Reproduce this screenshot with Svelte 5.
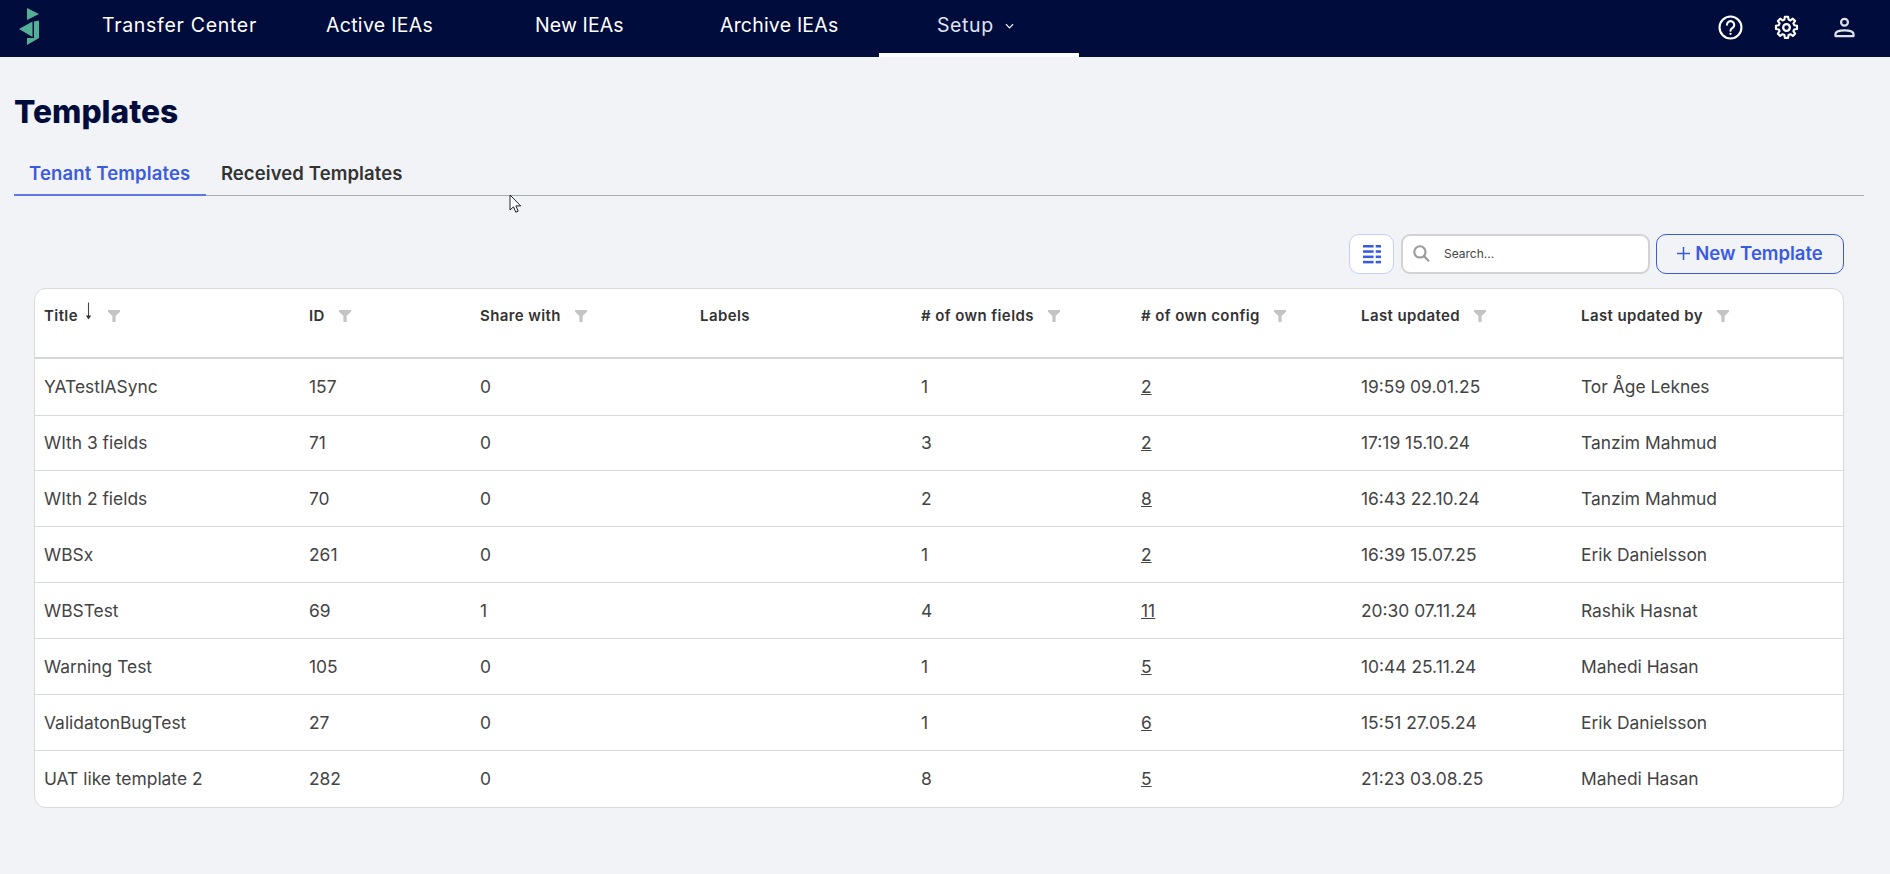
<script>
  const navItems = [
    { label: 'Transfer Center', w: 224, ls: 0.7 },
    { label: 'Active IEAs', w: 209, ls: 0.3 },
    { label: 'New IEAs', w: 185, ls: 0.1 },
    { label: 'Archive IEAs', w: 217, ls: 0.2 }
  ];
  const cols = [
    { label: 'Title', sort: true, filter: true },
    { label: 'ID', filter: true },
    { label: 'Share with', filter: true },
    { label: 'Labels', filter: false },
    { label: '# of own fields', filter: true },
    { label: '# of own config', filter: true },
    { label: 'Last updated', filter: true },
    { label: 'Last updated by', filter: true }
  ];
  const rows = [
    ['YATestIASync', '157', '0', '', '1', '2', '19:59 09.01.25', 'Tor Åge Leknes'],
    ['WIth 3 fields', '71', '0', '', '3', '2', '17:19 15.10.24', 'Tanzim Mahmud'],
    ['WIth 2 fields', '70', '0', '', '2', '8', '16:43 22.10.24', 'Tanzim Mahmud'],
    ['WBSx', '261', '0', '', '1', '2', '16:39 15.07.25', 'Erik Danielsson'],
    ['WBSTest', '69', '1', '', '4', '11', '20:30 07.11.24', 'Rashik Hasnat'],
    ['Warning Test', '105', '0', '', '1', '5', '10:44 25.11.24', 'Mahedi Hasan'],
    ['ValidatonBugTest', '27', '0', '', '1', '6', '15:51 27.05.24', 'Erik Danielsson'],
    ['UAT like template 2', '282', '0', '', '8', '5', '21:23 03.08.25', 'Mahedi Hasan']
  ];
</script>

<div class="page">
  <header class="nav">
    <svg class="logo" viewBox="0 0 20 37" width="20" height="37" aria-label="logo">
      <path d="M8 0 L20 6 L8 12 Z" fill="#54b095" />
      <path d="M0 21 L13.500 13.500 V29 Z" fill="#54b095" />
      <path d="M15 13.500 L20 12.500 V30 L8 37 V30 L15 30 Z" fill="#54b095" />
    </svg>
    <nav class="links">
      {#each navItems as item}
        <div class="link" style="width:{item.w}px;letter-spacing:{item.ls}px">{item.label}</div>
      {/each}
      <div class="link active">
        Setup
        <svg viewBox="0 0 10 6" width="9" height="6" class="chev"><path d="M1 1l4 4 4-4" fill="none" stroke="#fff" stroke-width="1.300" /></svg>
      </div>
    </nav>
    <div class="icons">
      <svg class="i-help" viewBox="0 0 26 26" width="25" height="25" fill="none" stroke="#fff" stroke-width="2.200">
        <circle cx="13" cy="13" r="11.400" />
        <path d="M9.300 10.200a3.800 3.800 0 1 1 5.900 3.200c-1.300.9-2.200 1.500-2.200 3" stroke-linecap="round" />
        <circle cx="13" cy="19.600" r="1.200" fill="#fff" stroke="none" />
      </svg>
      <svg class="i-gear" viewBox="0 0 24 24" width="25" height="25" fill="none" stroke="#fff" stroke-width="2.200" stroke-linejoin="round">
        <path d="M10.300 2h3.400l.5 3 1.900.8 2.500-1.800 2.400 2.400-1.800 2.500.8 1.900 3 .5v3.400l-3 .5-.8 1.900 1.800 2.500-2.400 2.400-2.500-1.800-1.900.8-.5 3h-3.400l-.5-3-1.900-.8-2.500 1.800-2.400-2.400 1.800-2.500-.8-1.900-3-.5v-3.400l3-.5.8-1.900-1.800-2.500 2.400-2.400 2.500 1.800 1.900-.8z" transform="translate(12 12) scale(.92) translate(-12 -13.200)" />
        <circle cx="12" cy="12" r="3.200" />
      </svg>
      <svg class="i-user" viewBox="0 0 22 22" width="21" height="21" fill="none" stroke="#dfe2ea" stroke-width="2.300">
        <circle cx="11" cy="5.500" r="3.600" />
        <path d="M1.500 20v-1.800c0-2.500 3.500-4.200 9.500-4.200s9.500 1.700 9.500 4.200V20z" stroke-linejoin="round" />
      </svg>
    </div>
  </header>

  <main class="main">
    <h1>Templates</h1>
    <div class="tabs">
      <div class="tab on">Tenant Templates</div>
      <div class="tab">Received Templates</div>
    </div>

    <div class="toolbar">
      <button class="columns" aria-label="columns">
        <svg viewBox="0 0 17 18" width="18" height="19" fill="#3a5be0">
          <rect x="0" y="0" width="10" height="2.400" /><rect x="12" y="0" width="5" height="2.400" />
          <rect x="0" y="5" width="10" height="2.400" /><rect x="12" y="5" width="5" height="2.400" />
          <rect x="0" y="10" width="10" height="2.400" /><rect x="12" y="10" width="5" height="2.400" />
          <rect x="0" y="15" width="10" height="2.400" /><rect x="12" y="15" width="5" height="2.400" />
        </svg>
      </button>
      <div class="search">
        <svg viewBox="0 0 16 16" width="17" height="17" fill="none" stroke="#9a9a9a" stroke-width="2">
          <circle cx="6.500" cy="6.500" r="5.300" /><path d="M10.500 10.500 15 15.300" />
        </svg>
        <span>Search...</span>
      </div>
      <button class="new">
        <svg viewBox="0 0 12 12" width="13" height="13" stroke="#3a5be0" stroke-width="1.400"><path d="M6 0v12M0 6h12" /></svg>
        New Template
      </button>
    </div>

    <div class="card">
      <table>
        <colgroup>
          <col style="width:265px" /><col style="width:171px" /><col style="width:220px" /><col style="width:221px" />
          <col style="width:220px" /><col style="width:220px" /><col style="width:220px" /><col />
        </colgroup>
        <thead>
          <tr>
            {#each cols as c}
              <th>
                <div class="th">
                  <span>{c.label}</span>
                  {#if c.sort}
                    <svg class="sort" viewBox="0 0 7 18" width="7" height="19"><path d="M3.500 0v15" stroke="#444" stroke-width="1.100" /><path d="M.8 13h5.400L3.500 17z" fill="#333" /></svg>
                  {/if}
                  {#if c.filter}
                    <svg class="filter" viewBox="0 0 11 11" width="12" height="12"><path d="M0 0h11v1.500L7 5.500V11H4V5.500L0 1.500z" fill="#c4c4c4" /></svg>
                  {/if}
                </div>
              </th>
            {/each}
          </tr>
        </thead>
        <tbody>
          {#each rows as r}
            <tr>
              {#each r as v, i}
                <td>{#if i === 5}<u>{v}</u>{:else}{v}{/if}</td>
              {/each}
            </tr>
          {/each}
        </tbody>
      </table>
    </div>
  </main>

  <svg class="cursor" viewBox="0 0 13 20" width="13" height="20">
    <path d="M1 1v15l3.500-3.200 2.300 5.400 2.400-1-2.300-5.300h4.800z" fill="#fff" stroke="#222" stroke-width="1" />
  </svg>
</div>

<style>
  :global(body) {
    margin: 0;
    background: #f1f3f7;
    font-family: Inter, "Liberation Sans", sans-serif;
  }
  .page {
    position: relative;
    height: 874px;
    overflow: hidden;
    background: #f1f3f7;
  }
  .nav {
    height: 57px;
    background: #000c3c;
    display: flex;
    align-items: flex-start;
  }
  .logo {
    margin: 8px 0 0 19px;
    flex: none;
  }
  .links {
    display: flex;
    margin-left: 63px;
    height: 57px;
  }
  .link {
    box-sizing: border-box;
    height: 57px;
    color: #fff;
    font-size: 19.500px;
    line-height: 51px;
    white-space: nowrap;
  }
  .link.active {
    width: 200px;
    margin-left: -58px;
    padding-left: 58px;
    border-bottom: 4px solid #fff;
    color: #dfe3f2;
    letter-spacing: 0.6px;
  }
  .chev {
    margin-left: 5px;
    vertical-align: 3px;
  }
  .icons {
    margin-left: auto;
    margin-right: 35px;
    margin-top: 15px;
    display: flex;
    align-items: center;
    gap: 31px;
  }
  .i-gear {
    margin-right: 4px;
  }
  .main {
    padding: 0 26px 0 14px;
  }
  h1 {
    margin: 0;
    padding-top: 37px;
    font-size: 31.700px;
    line-height: 36px;
    font-weight: 800;
    color: #000c3c;
  }
  .tabs {
    margin-top: 19px;
    display: flex;
    height: 47px;
    box-sizing: border-box;
    border-bottom: 1px solid #a9abb3;
  }
  .tab {
    box-sizing: border-box;
    height: 47px;
    padding: 0 15px;
    line-height: 48px;
    font-size: 18.500px;
    font-weight: 600;
    letter-spacing: 0.1px;
    color: #333;
  }
  .tab.on {
    color: #3a5be0;
    border-bottom: 2px solid #5a78e6;
    padding-right: 16px;
    letter-spacing: 0.15px;
  }
  .tab:last-child {
    padding-left: 14.500px;
  }
  .toolbar {
    margin-top: 38px;
    margin-right: 20px;
    display: flex;
    justify-content: flex-end;
    gap: 6px;
    height: 40px;
  }
  .columns {
    box-sizing: border-box;
    width: 45px;
    height: 40px;
    margin-right: 1px;
    border: 1px solid #c3cffa;
    border-radius: 10px;
    background: #fff;
    padding: 0;
    display: flex;
    align-items: center;
    justify-content: center;
  }
  .search {
    box-sizing: border-box;
    width: 249px;
    height: 40px;
    border: 2px solid #d3d3d3;
    border-radius: 9px;
    background: #fff;
    display: flex;
    align-items: center;
    padding-left: 10px;
    padding-bottom: 1px;
    gap: 14px;
    font-size: 12px;
    color: #444;
  }
  .new {
    box-sizing: border-box;
    width: 188px;
    height: 40px;
    border: 1px solid #3a5be0;
    border-radius: 10px;
    background: transparent;
    color: #3a5be0;
    font-family: inherit;
    font-size: 18.500px;
    font-weight: 600;
    display: flex;
    align-items: center;
    justify-content: center;
    gap: 5px;
    padding: 0 0 2px;
  }
  .card {
    margin-top: 14px;
    margin-left: 20px;
    margin-right: 20px;
    box-sizing: border-box;
    height: 520px;
    background: #fff;
    border: 1px solid #d9d9d9;
    border-radius: 12px;
    overflow: hidden;
  }
  table {
    width: 100%;
    border-collapse: collapse;
    table-layout: fixed;
  }
  thead tr {
    height: 69px;
    border-bottom: 2px solid #d6d6d6;
  }
  th {
    padding: 0 0 0 9px;
    text-align: left;
    vertical-align: top;
    font-size: 15px;
    font-weight: 600;
    letter-spacing: 0.4px;
    color: #333;
  }
  .th {
    display: flex;
    align-items: center;
    height: 52px;
    white-space: nowrap;
  }
  .sort {
    margin-left: 7px;
    margin-top: -7px;
  }
  .filter {
    margin-left: 14px;
    margin-top: 1px;
  }
  .sort + .filter {
    margin-left: 16px;
  }
  tbody tr {
    height: 55.900px;
    border-bottom: 1px solid #d9d9d9;
  }
  tbody tr:first-child {
    height: 57px;
  }
  tbody tr:last-child {
    border-bottom: none;
  }
  td {
    padding: 0 0 0 9px;
    font-size: 17.400px;
    color: #444;
    white-space: nowrap;
  }
  .cursor {
    position: absolute;
    left: 509px;
    top: 194px;
  }
</style>
